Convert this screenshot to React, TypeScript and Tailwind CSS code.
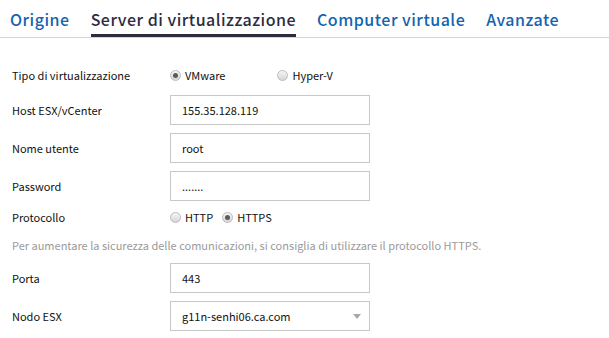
import React from "react";

const Radio = ({ checked, label }: { checked?: boolean; label: string }) => (
  <label className="flex items-center gap-[4px]">
    <span className="w-[11px] h-[11px] rounded-full border border-[#bcbcbc] bg-gradient-to-b from-[#f6f6f6] to-[#d6d6d6] flex items-center justify-center">
      {checked && <span className="w-[5px] h-[5px] rounded-full bg-[#5a5a5a]" />}
    </span>
    <span>{label}</span>
  </label>
);

const Row = ({ label, children }: { label: string; children: React.ReactNode }) => (
  <div className="flex items-center">
    <div className="w-[158px] shrink-0">{label}</div>
    {children}
  </div>
);

const Input = ({ value, select }: { value: string; select?: boolean }) => (
  <div className="w-[200px] h-[30px] border border-[#c8c8c8] flex items-center justify-between pl-[11px] pr-[8px]">
    <span>{value}</span>
    {select && <span className="w-0 h-0 border-l-[4px] border-r-[4px] border-t-[5px] border-l-transparent border-r-transparent border-t-[#a8a8a8]" />}
  </div>
);

const App: React.FC = () => {
  const tabs = ["Origine", "Server di virtualizzazione", "Computer virtuale", "Avanzate"];

  return (
    <div className="w-[609px] h-[338px] bg-white overflow-hidden font-['Noto_Sans_CJK_JP',sans-serif] text-[11px] leading-[16px] text-[#111]">
      {/* Tabs */}
      <div className="flex h-[38px] border-b border-[#d4d4dc] pl-[10px] gap-[21px]">
        {tabs.map((t, i) => (
          <div
            key={t}
            className={`h-[37px] flex items-center text-[16px] font-medium tracking-[0.5px] ${
              i === 1 ? "text-[#2e2b3f] border-b-[3px] border-[#2e2b3f] pt-[3px]" : "text-[#1463ae]"
            }`}
          >
            {t}
          </div>
        ))}
      </div>

      {/* Form */}
      <div className="pl-[12px] pt-[29px] flex flex-col">
        <Row label="Tipo di virtualizzazione">
          <div className="flex gap-[52px] h-[16px]">
            <Radio checked label="VMware" />
            <Radio label="Hyper-V" />
          </div>
        </Row>
        <div className="mt-[12px] flex flex-col gap-[8px]">
          <Row label="Host ESX/vCenter">
            <Input value="155.35.128.119" />
          </Row>
          <Row label="Nome utente">
            <Input value="root" />
          </Row>
          <Row label="Password">
            <Input value="......." />
          </Row>
        </div>
        <div className="mt-[8px]">
          <Row label="Protocollo">
            <div className="flex gap-[9px] h-[16px]">
              <Radio label="HTTP" />
              <Radio checked label="HTTPS" />
            </div>
          </Row>
        </div>
        <div className="mt-[12px] text-[#9a9a9a]">
          Per aumentare la sicurezza delle comunicazioni, si consiglia di utilizzare il protocollo HTTPS.
        </div>
        <div className="mt-[10px] flex flex-col gap-[8px]">
          <Row label="Porta">
            <Input value="443" />
          </Row>
          <Row label="Nodo ESX">
            <Input value="g11n-senhi06.ca.com" select />
          </Row>
        </div>
      </div>
    </div>
  );
};

export default App;
